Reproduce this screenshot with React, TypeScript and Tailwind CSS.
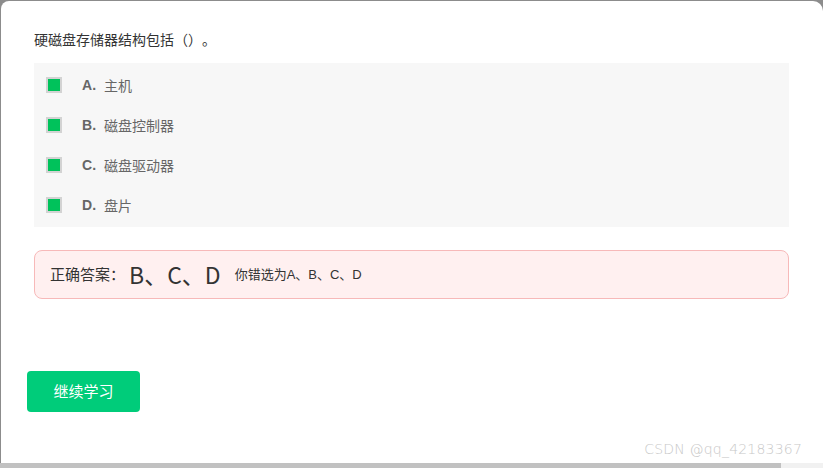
import React from 'react';

const options = [
  { key: 'A', text: '主机' },
  { key: 'B', text: '磁盘控制器' },
  { key: 'C', text: '磁盘驱动器' },
  { key: 'D', text: '盘片' },
];

const font = "font-['Microsoft_YaHei','Noto_Sans_CJK_SC',sans-serif]";

function Checkbox() {
  return (
    <div className="w-[16px] h-[16px] border-2 border-[#d3d3d3] bg-white flex items-center justify-center">
      <div className="w-[12px] h-[12px] bg-[#00c25b]" />
    </div>
  );
}

export default function App() {
  return (
    <div className={`w-[823px] h-[468px] bg-[#8c8c8c] flex flex-col pl-px pt-px overflow-hidden [text-spacing-trim:space-all] ${font}`}>
      <div className="relative flex-1 bg-white rounded-tl-[8px] rounded-tr-[10px] px-[33px] pt-[27px]">
        <div className="text-[14px] leading-[22px] text-[#333]">硬磁盘存储器结构包括（）。</div>

        {/* options */}
        <div className="mt-[13px] bg-[#f7f7f7] py-[2px] w-[755px]">
          {options.map((o) => (
            <div key={o.key} className="h-[40px] flex items-center pl-[12px]">
              <Checkbox />
              <span className="ml-[20px] w-[22px] text-[14px] font-bold text-[#666] font-['Liberation_Sans',sans-serif]">{o.key}.</span>
              <span className="text-[14px] text-[#666]">{o.text}</span>
            </div>
          ))}
        </div>

        {/* answer */}
        <div className="mt-[23px] w-[755px] h-[49px] rounded-[8px] border border-[#f7b9b9] bg-[#fff0f0] flex items-center pl-[15px]">
          <span className="text-[15px] text-[#333]">正确答案：</span>
          <span className="ml-[4px] text-[23px] text-[#333] leading-none">B、C、D</span>
          <span className="ml-[14px] text-[13px] text-[#333] font-['Liberation_Sans','Noto_Sans_CJK_SC',sans-serif]">你错选为A、B、C、D</span>
        </div>

        <button className="mt-[72px] -ml-[7px] w-[113px] h-[41px] rounded-[4px] bg-[#00cc7a] text-white text-[15px]">
          继续学习
        </button>

        <div className="absolute right-[21px] bottom-[3px] text-[14px] text-[#c8c8c8] font-['DejaVu_Sans',sans-serif] font-light tracking-[0.2px]">
          CSDN @qq_42183367
        </div>
      </div>
      <div className="h-[5px] -ml-px flex">
        <div className="w-[781px] bg-[#c1c1c1]" />
        <div className="flex-1 bg-[#f1f1f1]" />
      </div>
    </div>
  );
}
